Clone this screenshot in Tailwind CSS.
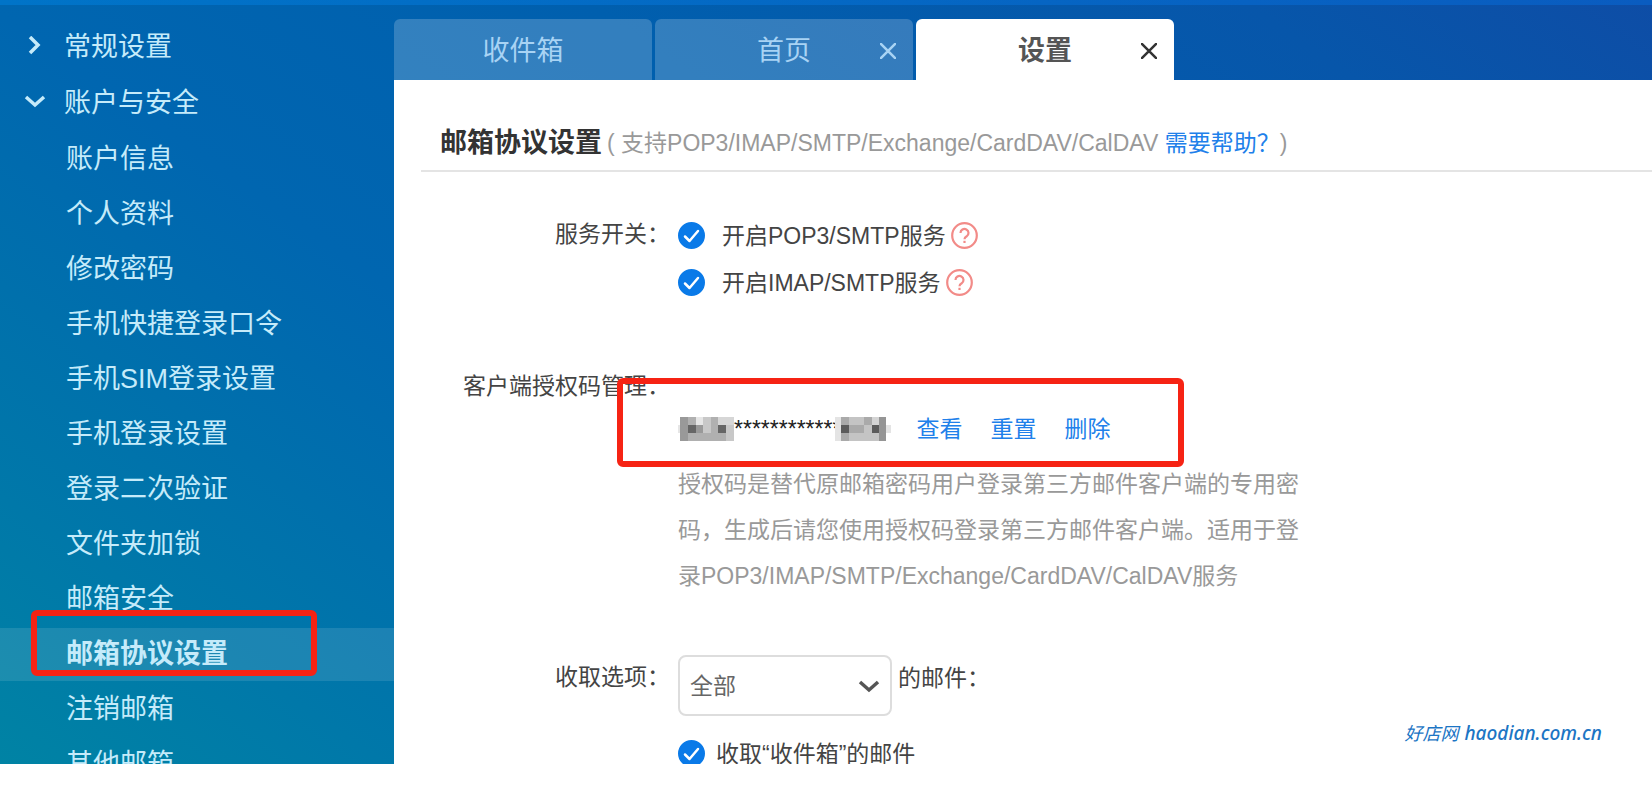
<!DOCTYPE html>
<html lang="zh-CN">
<head>
  <meta charset="UTF-8" />
  <meta name="viewport" content="width=device-width, initial-scale=1.0"/>
  <title>邮箱协议设置</title>
  <script src="https://cdn.jsdelivr.net/npm/@tailwindcss/browser@4"></script>
</head>
<body class="bg-white font-['Liberation_Sans','Noto_Sans_CJK_SC',sans-serif] text-[#444]">
<div class="relative h-screen pb-[42px]">
  <div class="flex h-full flex-col overflow-hidden bg-[linear-gradient(215deg,#0e4da6_0%,#0756aa_15%,#005fae_39%,#0066b0_61%,#0070ac_75%,#0078a9_86%,#0083a4_100%)]">
    <div class="h-[5px] shrink-0 bg-linear-to-r from-[#0074c8] to-[#0a5cc0]"></div>
    <div class="flex min-h-0 flex-1">

      <!-- sidebar -->
      <nav class="w-[394px] shrink-0 pt-[14px] text-[27px] text-[#c5ebfa]">
        <button type="button" class="flex h-14 w-full items-center gap-[18px] pl-6">
          <svg class="size-[22px]" viewBox="0 0 22 22" fill="none" stroke="currentColor" stroke-width="3.5"><path d="M6 1l8 8-8 8"/></svg>
          <span>常规设置</span>
        </button>
        <button type="button" class="flex h-14 w-full items-center gap-[18px] pl-6">
          <svg class="size-[22px]" viewBox="0 0 22 22" fill="none" stroke="currentColor" stroke-width="3.5"><path d="M2 5l9 8 9-8"/></svg>
          <span>账户与安全</span>
        </button>
        <ul class="pt-[2px]">
          <li class="h-[55px]"><a href="#" class="flex h-[53px] items-center pl-[66px]">账户信息</a></li>
          <li class="h-[55px]"><a href="#" class="flex h-[53px] items-center pl-[66px]">个人资料</a></li>
          <li class="h-[55px]"><a href="#" class="flex h-[53px] items-center pl-[66px]">修改密码</a></li>
          <li class="h-[55px]"><a href="#" class="flex h-[53px] items-center pl-[66px]">手机快捷登录口令</a></li>
          <li class="h-[55px]"><a href="#" class="flex h-[53px] items-center pl-[66px]">手机SIM登录设置</a></li>
          <li class="h-[55px]"><a href="#" class="flex h-[53px] items-center pl-[66px]">手机登录设置</a></li>
          <li class="h-[55px]"><a href="#" class="flex h-[53px] items-center pl-[66px]">登录二次验证</a></li>
          <li class="h-[55px]"><a href="#" class="flex h-[53px] items-center pl-[66px]">文件夹加锁</a></li>
          <li class="h-[55px]"><a href="#" class="flex h-[53px] items-center pl-[66px]">邮箱安全</a></li>
          <li class="relative h-[55px]">
            <a href="#" class="flex h-[53px] items-center bg-white/11 pl-[66px] font-bold">邮箱协议设置</a>
            <div class="pointer-events-none absolute -top-[18px] left-[31px] h-[66px] w-[286px] rounded-md border-6 border-[#f62314]"></div>
          </li>
          <li class="h-[55px]"><a href="#" class="flex h-[53px] items-center pl-[66px]">注销邮箱</a></li>
          <li class="h-[55px]"><a href="#" class="flex h-[53px] items-center pl-[66px]">其他邮箱</a></li>
        </ul>
      </nav>

      <div class="flex min-w-0 flex-1 flex-col">
        <!-- tabs -->
        <div class="flex h-[75px] shrink-0 gap-[3px] pt-[14px] text-[27px]">
          <div class="relative w-[258px] rounded-t-md bg-white/20 text-[#a8d3f4]">
            <button type="button" class="h-full w-full pt-1">收件箱</button>
          </div>
          <div class="relative w-[258px] rounded-t-md bg-white/20 text-[#a8d3f4]">
            <button type="button" class="h-full w-full pt-1">首页</button>
            <button type="button" aria-label="关闭" class="absolute top-6 right-[17px]">
              <svg class="size-4" viewBox="0 0 16 16" fill="none" stroke="currentColor" stroke-width="2.5"><path d="M0 0l16 16M16 0L0 16"/></svg>
            </button>
          </div>
          <div class="relative w-[258px] rounded-t-md bg-white text-[#333]">
            <button type="button" class="h-full w-full pt-1 font-bold text-[#555]">设置</button>
            <button type="button" aria-label="关闭" class="absolute top-6 right-[17px]">
              <svg class="size-4" viewBox="0 0 16 16" fill="none" stroke="currentColor" stroke-width="2.5"><path d="M0 0l16 16M16 0L0 16"/></svg>
            </button>
          </div>
        </div>

        <main class="min-h-0 flex-1 bg-white text-[23px] leading-[46px]">
          <div class="ml-[27px] flex items-center border-b-2 border-[#e4e4e4] pt-10 pb-1 pl-[19px] whitespace-nowrap text-[#999]">
            <h1 class="mr-[5px] text-[27px] font-bold text-[#333]">邮箱协议设置</h1>
            <p>( 支持POP3/IMAP/SMTP/Exchange/CardDAV/CalDAV <a href="#" class="text-[#2080ea]">需要帮助？</a>)</p>
          </div>

          <form>
            <section class="mt-[39px] flex gap-2">
              <h2 class="w-[276px] shrink-0 text-right">服务开关：</h2>
              <div class="pt-px">
                <div class="flex h-[47px] items-center gap-[5px]">
                  <label class="relative flex items-center gap-[17px]">
                    <input type="checkbox" checked class="size-[27px] appearance-none rounded-full border-2 border-[#0a7ae8] checked:bg-[#0a7ae8]">
                    <svg class="pointer-events-none absolute left-0 size-[27px]" viewBox="0 0 27 27" fill="none" stroke="#fff" stroke-width="2.5" stroke-linecap="round" stroke-linejoin="round"><path d="M7 14.5l4.500 4.500L20 9"/></svg>
                    开启POP3/SMTP服务
                  </label>
                  <button type="button" aria-label="帮助">
                    <svg class="size-[27px]" viewBox="0 0 27 27" fill="none" stroke="#f28b88" stroke-width="2.2"><circle cx="13.5" cy="13.5" r="12.3"/><path d="M9.500 11a4 4 0 1 1 6.200 3.300c-1.600 1-2.200 1.500-2.200 3"/><path d="M13.500 18.800v2.200"/></svg>
                  </button>
                </div>
                <div class="flex h-[47px] items-center gap-[5px]">
                  <label class="relative flex items-center gap-[17px]">
                    <input type="checkbox" checked class="size-[27px] appearance-none rounded-full border-2 border-[#0a7ae8] checked:bg-[#0a7ae8]">
                    <svg class="pointer-events-none absolute left-0 size-[27px]" viewBox="0 0 27 27" fill="none" stroke="#fff" stroke-width="2.5" stroke-linecap="round" stroke-linejoin="round"><path d="M7 14.5l4.500 4.500L20 9"/></svg>
                    开启IMAP/SMTP服务
                  </label>
                  <button type="button" aria-label="帮助">
                    <svg class="size-[27px]" viewBox="0 0 27 27" fill="none" stroke="#f28b88" stroke-width="2.2"><circle cx="13.5" cy="13.5" r="12.3"/><path d="M9.500 11a4 4 0 1 1 6.200 3.300c-1.600 1-2.200 1.500-2.200 3"/><path d="M13.500 18.800v2.200"/></svg>
                  </button>
                </div>
              </div>
            </section>

            <section class="mt-[57px] flex gap-2">
              <h2 class="w-[276px] shrink-0 text-right">客户端授权码管理：</h2>
              <div class="pt-[43px]">
                <div class="relative flex h-[46px] items-center">
                  <!-- masked characters -->
                  <svg class="h-6 w-14" viewBox="2 0 56 24" shape-rendering="crispEdges">
                    <path fill="#e6e6e6" d="M0 8h4v8H0zM20 0h7v8h-7z"/>
                    <path fill="#999" d="M4 0h8v24H4zM20 8h7v8h-7z"/>
                    <path fill="#b0b0b0" d="M12 0h8v8h-8zM12 16h46v8H12zM35 0h7v8h-7zM35 8h7v8h-7z"/>
                    <path fill="#c8c8c8" d="M27 0h8v16h-8zM50 8h8v8h-8zM50 16h8v8h-8z"/>
                    <path fill="#d6d6d6" d="M42 0h16v8H42z"/>
                    <path fill="#666" d="M12 8h8v8h-8zM42 8h8v8h-8z"/>
                  </svg>
                  <span class="h-[46px] text-[#222]">************</span>
                  <svg class="-ml-[6px] h-6 w-14" viewBox="0 0 56 24" shape-rendering="crispEdges">
                    <path fill="#e4e4e4" d="M0 0h6v24H0zM51 8h5v8h-5z"/>
                    <path fill="#aaa" d="M6 0h8v24H6zM14 8h15v8H14zM29 0h8v8h-8z"/>
                    <path fill="#c4c4c4" d="M14 0h15v8H14zM14 16h30v8H14zM29 8h8v8h-8z"/>
                    <path fill="#d4d4d4" d="M37 0h7v8h-7z"/>
                    <path fill="#959595" d="M44 0h7v24h-7z"/>
                    <path fill="#5c5c5c" d="M6 8h8v8H6zM37 8h7v8h-7z"/>
                  </svg>
                  <div class="ml-[25px] flex gap-7 text-[#2080ea]">
                    <a href="#">查看</a>
                    <a href="#">重置</a>
                    <a href="#">删除</a>
                  </div>
                  <div class="pointer-events-none absolute -top-7 -left-[61px] h-[89px] w-[567px] rounded-md border-6 border-[#f62314]"></div>
                </div>
                <p class="mt-[9px] w-[624px] text-[#999]">授权码是替代原邮箱密码用户登录第三方邮件客户端的专用密码，生成后请您使用授权码登录第三方邮件客户端。适用于登录POP3/IMAP/SMTP/Exchange/CardDAV/CalDAV服务</p>
              </div>
            </section>

            <section class="mt-[55px] flex gap-2">
              <h2 class="w-[276px] shrink-0 text-right">收取选项：</h2>
              <div class="pt-px">
                <div class="flex gap-[6px]">
                  <div class="relative">
                    <select id="range" class="h-[61px] w-[214px] appearance-none rounded-lg border-2 border-[#ddd] bg-white pl-[10px] text-[#666]">
                      <option>全部</option>
                    </select>
                    <svg class="pointer-events-none absolute top-5 right-3 size-[22px]" viewBox="0 0 22 22" fill="none" stroke="#555" stroke-width="3.5"><path d="M2 7l9 8 9-8"/></svg>
                  </div>
                  <label for="range">的邮件：</label>
                </div>
                <label class="relative mt-[14px] flex h-[47px] items-center gap-[11px]">
                  <input type="checkbox" checked class="size-[27px] appearance-none rounded-full border-2 border-[#0a7ae8] checked:bg-[#0a7ae8]">
                  <svg class="pointer-events-none absolute left-0 size-[27px]" viewBox="0 0 27 27" fill="none" stroke="#fff" stroke-width="2.5" stroke-linecap="round" stroke-linejoin="round"><path d="M7 14.5l4.500 4.500L20 9"/></svg>
                  收取“收件箱”的邮件
                </label>
              </div>
            </section>
          </form>
        </main>
      </div>
    </div>
  </div>

  <div class="absolute right-[50px] bottom-[60px] flex gap-[6px] font-['Noto_Sans','Noto_Sans_CJK_SC',sans-serif] text-[19px] leading-[26px] text-[#1c75c4] italic">
    <span class="text-[18px]">好店网</span>
    <span class="font-medium">haodian.com.cn</span>
  </div>
</div>
</body>
</html>
